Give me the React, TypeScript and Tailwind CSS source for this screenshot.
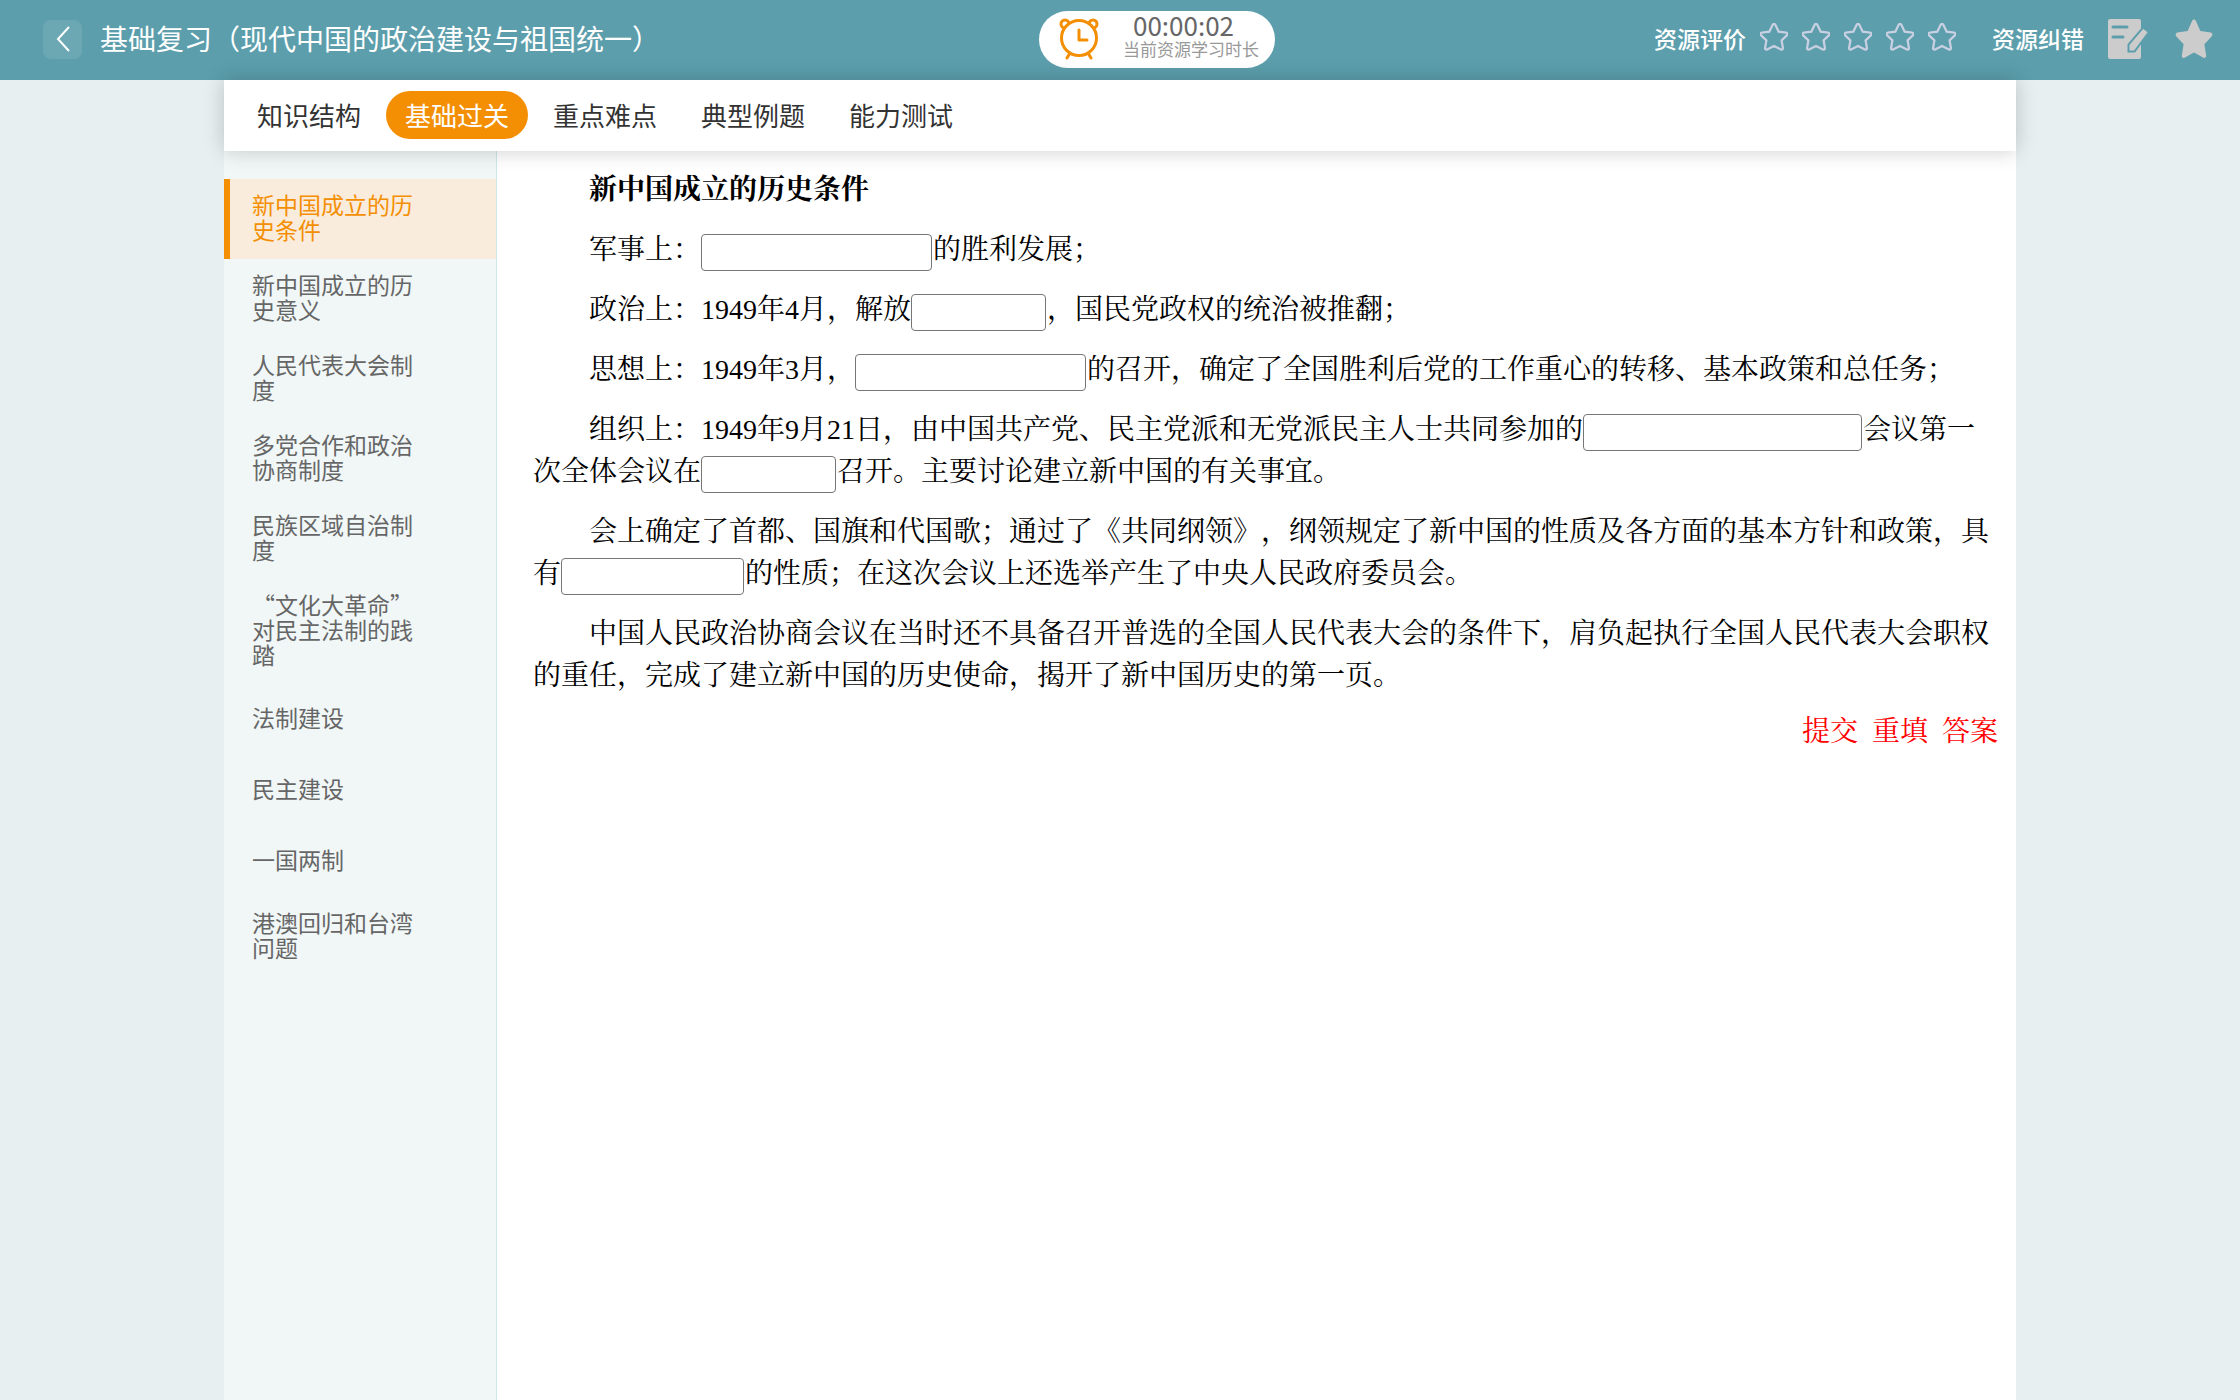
const TABS = ['知识结构', '基础过关', '重点难点', '典型例题', '能力测试']

const SECTIONS = [
  '新中国成立的历史条件',
  '新中国成立的历史意义',
  '人民代表大会制度',
  '多党合作和政治协商制度',
  '民族区域自治制度',
  '“文化大革命”对民主法制的践踏',
  '法制建设',
  '民主建设',
  '一国两制',
  '港澳回归和台湾问题',
]

const STAR = 'M12 2.2c.5 0 .8.3 1 .7l2.5 5.1 5.7.8c.9.1 1.2 1.2.6 1.8l-4.1 4 1 5.7c.1.9-.7 1.5-1.5 1.1L12 18.7l-5.200 2.7c-.8.4-1.6-.2-1.5-1.1l1-5.700-4.100-4c-.6-.6-.3-1.7.6-1.8l5.7-.8L11 2.900c.2-.4.5-.7 1-.7z'

function AlarmClock() {
  return (
    <svg viewBox="0 0 40 42" className="w-10 h-[42px]" fill="none" stroke="#f48f04" strokeWidth="3" strokeLinecap="round" aria-hidden="true">
      <circle cx="6" cy="6" r="4" />
      <circle cx="34" cy="6" r="4" />
      <path d="M11 35l-3 5M29 35l3 5" />
      <circle cx="20" cy="20" r="17.5" fill="#fff" />
      <path d="M20 12v10h8" strokeLinejoin="round" />
    </svg>
  )
}

function EditIcon() {
  return (
    <svg viewBox="0 0 40 40" className="w-10 h-10" aria-hidden="true">
      <rect width="33" height="40" rx="2" fill="#ccc" />
      <path d="M5 8h14M5 18h10" stroke="#5c9eac" strokeWidth="3" strokeLinecap="round" />
      <path d="M35 8.5l6 4.5-14.5 19.5h-6V25.5z" fill="#ccc" stroke="#5c9eac" strokeWidth="2" />
    </svg>
  )
}

function Blank({ label, width }: { label: string; width: string }) {
  return (
    <input
      type="text"
      aria-label={label}
      className={`${width} h-[37px] mr-px px-1 indent-0 align-middle bg-white border border-[#767676] rounded-[4px]`}
    />
  )
}

export default function App() {
  return (
    <div lang="zh-CN" className="min-h-screen flex flex-col bg-[#e7eff1] font-['Noto_Sans_CJK_SC',sans-serif]">
      <header className="h-20 shrink-0 flex items-center justify-between pl-[43px] pr-[26px] pb-0.5 bg-[#5c9eac] text-white">
        <div className="flex items-center gap-[18px]">
          <button type="button" aria-label="返回" className="w-[39px] h-[39px] flex items-center justify-center rounded-lg bg-white/10">
            <svg viewBox="0 0 14 26" className="w-[14px] h-[26px]" fill="none" stroke="currentColor" strokeWidth="2" aria-hidden="true">
              <path d="M13 1L2 13l11 12" />
            </svg>
          </button>
          <h1 className="pb-0.5 text-[28px] leading-10">基础复习（现代中国的政治建设与祖国统一）</h1>
        </div>

        <div className="w-[236px] h-[57px] flex items-center gap-6 pl-5 rounded-full bg-white">
          <AlarmClock />
          <div className="pb-3">
            <div className="pl-[10px] text-[26px] leading-8 text-[#666]">00:00:02</div>
            <div className="text-[17px] leading-4 text-[#999]">当前资源学习时长</div>
          </div>
        </div>

        <div className="flex items-center">
          <span className="pb-0.5 text-[23px] font-medium">资源评价</span>
          <div className="flex gap-[14px] ml-[14px] pb-1">
            {[1, 2, 3, 4, 5].map(n => (
              <button key={n} type="button" aria-label={`${n}星`}>
                <svg viewBox="1.500 1.500 21 21" className="w-7 h-7" fill="none" stroke="#c8d0e2" strokeWidth="1.7">
                  <path d={STAR} />
                </svg>
              </button>
            ))}
          </div>
          <span className="ml-9 pb-0.5 text-[23px] font-medium">资源纠错</span>
          <button type="button" aria-label="资源纠错" className="ml-6"><EditIcon /></button>
          <button type="button" aria-label="收藏" className="ml-[26px]">
            <svg viewBox="1 2 22 20" preserveAspectRatio="none" className="w-10 h-10" fill="#ccc"><path d={STAR} /></svg>
          </button>
        </div>
      </header>

      <div className="w-4/5 mx-auto flex-1 flex flex-col">
        <nav className="relative h-[71px] shrink-0 flex items-center gap-[6px] pl-[14px] pb-0.5 bg-white shadow-[0_0_20px_rgba(0,0,0,0.2)]">
          {TABS.map(t => (
            <button
              key={t}
              type="button"
              className={`h-12 px-[19px] rounded-full text-[26px] ${t === '基础过关' ? 'bg-[#f48f04] text-white' : 'text-[#333]'}`}
            >
              {t}
            </button>
          ))}
        </nav>

        <div className="flex-1 flex">
          <aside className="w-[273px] shrink-0 pt-7 bg-[#f1f7f7] border-r border-[#cde8e6]">
            {SECTIONS.map((s, i) => (
              <a
                key={s}
                href="#"
                className={`min-h-[71px] flex items-center pt-[13px] pb-[17px] pl-[22px] pr-20 border-l-[6px] text-[23px] leading-[25px] ${
                  i === 0 ? 'bg-[#faecdc] border-[#f48f04] text-[#f48f04]' : 'border-transparent text-[#666]'
                }`}
              >
                {s}
              </a>
            ))}
          </aside>

          <main className="flex-1 pt-[18px] pl-9 pr-[18px] bg-white text-black text-[28px] leading-[42px] [text-spacing-trim:space-all] font-['Liberation_Serif','Noto_Serif_CJK_SC','Noto_Sans_CJK_SC',serif]">
            <div className="flex flex-col gap-[18px] indent-14">
              <h2 className="font-bold">新中国成立的历史条件</h2>
              <p>军事上：<Blank label="军事上" width="w-[231px]" />的胜利发展；</p>
              <p>政治上：1949年4月，解放<Blank label="解放" width="w-[135px]" />，国民党政权的统治被推翻；</p>
              <p>思想上：1949年3月，<Blank label="思想上" width="w-[231px]" />的召开，确定了全国胜利后党的工作重心的转移、基本政策和总任务；</p>
              <p>组织上：1949年9月21日，由中国共产党、民主党派和无党派民主人士共同参加的<Blank label="会议名称" width="w-[279px]" />会议第一次全体会议在<Blank label="会议地点" width="w-[135px]" />召开。主要讨论建立新中国的有关事宜。</p>
              <p>会上确定了首都、国旗和代国歌；通过了《共同纲领》，纲领规定了新中国的性质及各方面的基本方针和政策，具有<Blank label="共同纲领的性质" width="w-[183px]" />的性质；在这次会议上还选举产生了中央人民政府委员会。</p>
              <p>中国人民政治协商会议在当时还不具备召开普选的全国人民代表大会的条件下，肩负起执行全国人民代表大会职权的重任，完成了建立新中国的历史使命，揭开了新中国历史的第一页。</p>
            </div>
            <div className="mt-[14px] flex justify-end gap-[14px] text-[#f00]">
              <button type="button">提交</button>
              <button type="button">重填</button>
              <button type="button">答案</button>
            </div>
          </main>
        </div>
      </div>
    </div>
  )
}
